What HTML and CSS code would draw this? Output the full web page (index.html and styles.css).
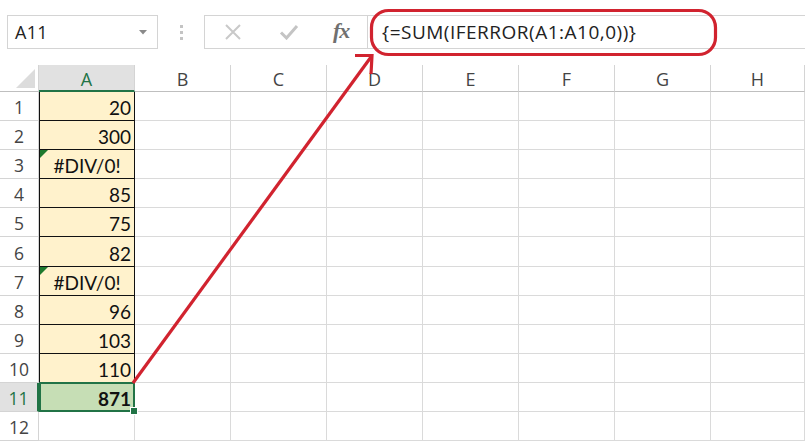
FILE: index.html
```html
<!DOCTYPE html>
<html>
<head>
<meta charset="utf-8">
<link rel="stylesheet" href="styles.css">
</head>
<body>
<div class="app">
  <div class="toolbar">
    <div class="namebox">
      <span class="name">A11</span>
      <svg class="dd" width="8" height="5" viewBox="0 0 8 5"><path d="M0 0H8L4 4.5Z" fill="#8a8a8a"/></svg>
    </div>
    <div class="grip"><i></i><i></i><i></i></div>
    <div class="fxbtns">
      <svg class="btn-x" width="18" height="18" viewBox="0 0 18 18"><path d="M2 2L16 16M16 2L2 16" stroke="#c9c9c9" stroke-width="2" fill="none"/></svg>
      <svg class="btn-ok" width="20" height="16" viewBox="0 0 20 16"><path d="M2 8.5L7.5 14L18 2" stroke="#c4c4c4" stroke-width="3" fill="none"/></svg>
      <span class="fx">fx</span>
    </div>
    <div class="formula">{=SUM(IFERROR(A1:A10,0))}</div>
  </div>

  <div class="sheet">
    <div class="corner"><span class="tri"></span></div>
    <div class="ch ch-sel">A</div>
    <div class="ch">B</div>
    <div class="ch">C</div>
    <div class="ch">D</div>
    <div class="ch">E</div>
    <div class="ch">F</div>
    <div class="ch">G</div>
    <div class="ch">H</div>

    <div class="rh">1</div><div class="c ca">20</div><div class="c"></div><div class="c"></div><div class="c"></div><div class="c"></div><div class="c"></div><div class="c"></div><div class="c"></div>
    <div class="rh">2</div><div class="c ca">300</div><div class="c"></div><div class="c"></div><div class="c"></div><div class="c"></div><div class="c"></div><div class="c"></div><div class="c"></div>
    <div class="rh">3</div><div class="c ca err"><span class="flag"></span>#DIV/0!</div><div class="c"></div><div class="c"></div><div class="c"></div><div class="c"></div><div class="c"></div><div class="c"></div><div class="c"></div>
    <div class="rh">4</div><div class="c ca">85</div><div class="c"></div><div class="c"></div><div class="c"></div><div class="c"></div><div class="c"></div><div class="c"></div><div class="c"></div>
    <div class="rh">5</div><div class="c ca">75</div><div class="c"></div><div class="c"></div><div class="c"></div><div class="c"></div><div class="c"></div><div class="c"></div><div class="c"></div>
    <div class="rh">6</div><div class="c ca">82</div><div class="c"></div><div class="c"></div><div class="c"></div><div class="c"></div><div class="c"></div><div class="c"></div><div class="c"></div>
    <div class="rh">7</div><div class="c ca err"><span class="flag"></span>#DIV/0!</div><div class="c"></div><div class="c"></div><div class="c"></div><div class="c"></div><div class="c"></div><div class="c"></div><div class="c"></div>
    <div class="rh">8</div><div class="c ca">96</div><div class="c"></div><div class="c"></div><div class="c"></div><div class="c"></div><div class="c"></div><div class="c"></div><div class="c"></div>
    <div class="rh">9</div><div class="c ca">103</div><div class="c"></div><div class="c"></div><div class="c"></div><div class="c"></div><div class="c"></div><div class="c"></div><div class="c"></div>
    <div class="rh">10</div><div class="c ca">110</div><div class="c"></div><div class="c"></div><div class="c"></div><div class="c"></div><div class="c"></div><div class="c"></div><div class="c"></div>
    <div class="rh rh-sel">11</div><div class="c csel">871<span class="handle"></span></div><div class="c"></div><div class="c"></div><div class="c"></div><div class="c"></div><div class="c"></div><div class="c"></div><div class="c"></div>
    <div class="rh">12</div><div class="c"></div><div class="c"></div><div class="c"></div><div class="c"></div><div class="c"></div><div class="c"></div><div class="c"></div><div class="c"></div>
  </div>

  <svg class="annot" width="805" height="444" viewBox="0 0 805 444">
    <rect x="371.5" y="10.5" width="344" height="44" rx="17" fill="none" stroke="#d1232f" stroke-width="3.2"/>
    <path d="M133 383L371 57" stroke="#d1232f" stroke-width="3.2" fill="none"/>
    <path d="M355 55.5H372L371 74" stroke="#d1232f" stroke-width="3.2" fill="none"/>
  </svg>
</div>
</body>
</html>
```

FILE: styles.css
```css
* { box-sizing: border-box; }
html, body { margin: 0; padding: 0; background: #fff; }
body { width: 805px; height: 444px; overflow: hidden; }

.app { position: relative; width: 805px; height: 444px; padding-top: 15px; font-family: "Open Sans", "Noto Sans", sans-serif; }

.toolbar {
  display: flex;
  align-items: stretch;
  height: 34px;
  padding-left: 7px;
}

.namebox {
  width: 151px;
  border: 1px solid #d4d4d4;
  display: flex;
  align-items: center;
  justify-content: space-between;
  padding: 0 10px 0 7px;
}
.name { font-size: 18px; color: #222; letter-spacing: 0.3px; }

.grip {
  width: 46px;
  display: flex;
  flex-direction: column;
  align-items: center;
  justify-content: center;
  gap: 3px;
}
.grip i { display: block; width: 3px; height: 3px; background: #c4c4c4; }

.fxbtns {
  width: 164px;
  border: 1px solid #d4d4d4;
  display: flex;
  align-items: center;
  padding-left: 19px;
}
.btn-x { margin-right: 37px; }
.btn-ok { margin-right: 34px; }
.fx { font-family: "Liberation Serif", "DejaVu Serif", serif; font-style: italic; font-weight: bold; font-size: 22px; color: #707070; margin-top: -3px; letter-spacing: -1px; }

.formula {
  flex: 1;
  border-top: 1px solid #d4d4d4;
  border-bottom: 1px solid #d4d4d4;
  display: flex;
  align-items: center;
  padding-left: 14px;
  font-size: 19px;
  letter-spacing: 0.5px;
  color: #222;
}

.sheet {
  margin-top: 16px;
  display: grid;
  grid-template-columns: 39px repeat(7, 96px) 1fr;
  grid-template-rows: 27px repeat(12, 29.1px);
}

.corner { position: relative; border-right: 1px solid #d4d4d4; border-bottom: 1px solid #bfbfbf; }
.tri {
  position: absolute; right: 3px; bottom: 3px;
  width: 0; height: 0;
  border-left: 19px solid transparent;
  border-bottom: 19px solid #dcdcdc;
}

.ch {
  display: flex; align-items: center; justify-content: center;
  font-size: 18px; color: #444;
  border-right: 1px solid #d4d4d4;
  border-bottom: 1px solid #bfbfbf;
  padding-top: 2px;
}
.ch-sel { background: #e1e1e1; color: #217346; border-bottom: 2px solid #217346; }

.rh {
  display: flex; align-items: center; justify-content: center;
  font-size: 17.5px; color: #444;
  border-right: 1px solid #d4d4d4;
  border-bottom: 1px solid #d4d4d4;
  padding-top: 2px;
}
.rh-sel { background: #e1e1e1; color: #217346; border-right: 2px solid #217346; }

.c {
  border-right: 1px solid #dadada;
  border-bottom: 1px solid #dadada;
  font-family: "Lato", "Liberation Sans", sans-serif;
  font-size: 19px;
  color: #111;
  display: flex; align-items: center; justify-content: flex-end;
  padding-right: 3px;
  padding-top: 3px;
}
.ca { background: #fff2cc; border-left: 1px solid #111; border-right: 1px solid #111; border-bottom: 1px solid #111; }
.err { justify-content: center; position: relative; padding-right: 0; }
.flag {
  position: absolute; left: 0; top: 0;
  width: 0; height: 0;
  border-top: 8px solid #1e7a2e;
  border-right: 8px solid transparent;
}
.csel {
  position: relative;
  background: #c6deb5;
  border: 2px solid #217346;
  font-weight: bold;
  padding-right: 2px;
  margin-top: -1px;
}
.handle {
  position: absolute; right: -5px; bottom: -5px;
  width: 8px; height: 8px;
  background: #217346;
  border: 1px solid #fff;
}

.annot { position: absolute; left: 0; top: 0; pointer-events: none; }
```
